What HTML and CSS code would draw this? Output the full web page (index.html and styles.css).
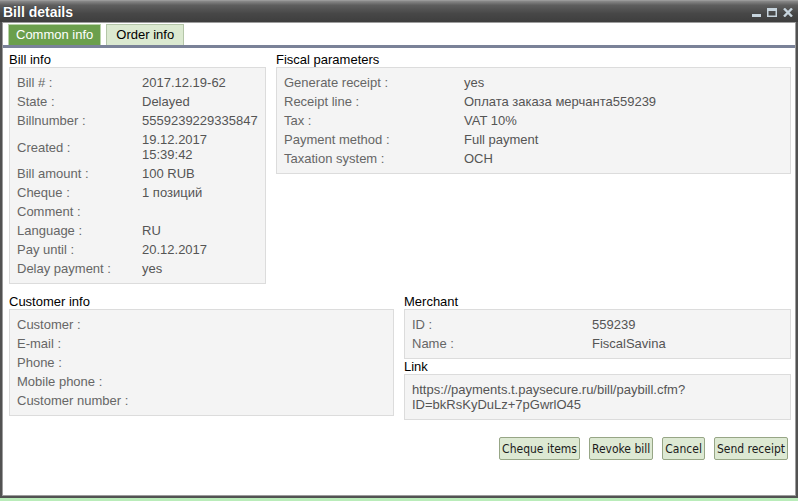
FILE: index.html
```html
<!DOCTYPE html>
<html lang="en">
<head>
    <meta charset="UTF-8">
    <title>Bill details</title>
    <link rel="stylesheet" href="styles.css">
</head>
<body>
    <div class="window">
        <div class="titlebar">
            <span class="title">Bill details</span>
            <div class="controls">
                <svg width="9" height="9" viewBox="0 0 9 9"><rect x="0" y="6" width="9" height="3" fill="#c7d4dd"/></svg>
                <svg width="10" height="9" viewBox="0 0 10 9"><rect x="0.75" y="0.75" width="8.5" height="7.5" fill="none" stroke="#c7d4dd" stroke-width="1.5"/><rect x="0" y="0" width="10" height="3" fill="#c7d4dd"/></svg>
                <svg width="10" height="9" viewBox="0 0 10 9"><path d="M1 0.5 L9 8.5 M9 0.5 L1 8.5" stroke="#c7d4dd" stroke-width="2.4"/></svg>
            </div>
        </div>
        <div class="content">
            <div class="tabs">
                <div class="tab active">Common info</div>
                <div class="tab">Order info</div>
            </div>
            <div class="body">
                <div class="row row-top">
                    <div class="section bill">
                        <div class="section-title">Bill info</div>
                        <div class="box grid grid-bill">
                            <div class="lbl">Bill # :</div><div class="val">2017.12.19-62</div>
                            <div class="lbl">State :</div><div class="val">Delayed</div>
                            <div class="lbl">Billnumber :</div><div class="val">5559239229335847</div>
                            <div class="lbl">Created :</div><div class="val">19.12.2017<br>15:39:42</div>
                            <div class="lbl">Bill amount :</div><div class="val">100 RUB</div>
                            <div class="lbl">Cheque :</div><div class="val">1 позиций</div>
                            <div class="lbl">Comment :</div><div class="val"></div>
                            <div class="lbl">Language :</div><div class="val">RU</div>
                            <div class="lbl">Pay until :</div><div class="val">20.12.2017</div>
                            <div class="lbl">Delay payment :</div><div class="val">yes</div>
                        </div>
                    </div>
                    <div class="section fiscal">
                        <div class="section-title">Fiscal parameters</div>
                        <div class="box grid grid-wide">
                            <div class="lbl">Generate receipt :</div><div class="val">yes</div>
                            <div class="lbl">Receipt line :</div><div class="val">Оплата заказа мерчанта559239</div>
                            <div class="lbl">Tax :</div><div class="val">VAT 10%</div>
                            <div class="lbl">Payment method :</div><div class="val">Full payment</div>
                            <div class="lbl">Taxation system :</div><div class="val">OCH</div>
                        </div>
                    </div>
                </div>
                <div class="row row-bottom">
                    <div class="section customer">
                        <div class="section-title">Customer info</div>
                        <div class="box grid grid-wide">
                            <div class="lbl">Customer :</div><div class="val"></div>
                            <div class="lbl">E-mail :</div><div class="val"></div>
                            <div class="lbl">Phone :</div><div class="val"></div>
                            <div class="lbl">Mobile phone :</div><div class="val"></div>
                            <div class="lbl">Customer number :</div><div class="val"></div>
                        </div>
                    </div>
                    <div class="section merchant">
                        <div class="section-title">Merchant</div>
                        <div class="box grid grid-wide">
                            <div class="lbl">ID :</div><div class="val">559239</div>
                            <div class="lbl">Name :</div><div class="val">FiscalSavina</div>
                        </div>
                        <div class="section-title">Link</div>
                        <div class="box">
                            <div class="val">https://payments.t.paysecure.ru/bill/paybill.cfm?<br>ID=bkRsKyDuLz+7pGwrlO45</div>
                        </div>
                    </div>
                </div>
                <div class="buttons">
                    <button class="btn">Cheque items</button>
                    <button class="btn">Revoke bill</button>
                    <button class="btn">Cancel</button>
                    <button class="btn">Send receipt</button>
                </div>
            </div>
        </div>
    </div>
</body>
</html>
```

FILE: styles.css
```css
body {
    margin: 0;
    background: #b9ecb9;
    font-family: "Liberation Sans", Arial, sans-serif;
    width: 798px;
    height: 501px;
    overflow: hidden;
}
.window {
    display: flex;
    flex-direction: column;
    width: 798px;
    height: 498px;
    box-sizing: border-box;
    padding: 0 2px 2px 2px;
    background: #525252;
}
.titlebar {
    height: 21px;
    display: flex;
    align-items: center;
    justify-content: space-between;
    padding: 0 5px 0 3px;
    background: linear-gradient(#8a8a8a 0%, #5e5e5e 20%, #474747 60%, #3e3e3e 100%);
    margin: 0 -2px;
    border-top: 1px solid #9a9a9a;
}
.title {
    color: #fff;
    font-weight: bold;
    font-size: 14px;
    text-shadow: 0 0 1px #222;
}
.controls {
    display: flex;
    gap: 6px;
    align-items: center;
    padding-top: 1px;
}
.content {
    flex: 1;
    display: flex;
    flex-direction: column;
    background: #fff;
    border: 1px solid #9d9d9d;
}
.tabs {
    display: flex;
    gap: 5px;
    padding: 1px 0 0 5px;
    border-bottom: 3px solid #7a8298;
}
.tab {
    height: 20px;
    line-height: 20px;
    padding: 0 9px;
    font-size: 13px;
    background: #dbe9d0;
    border: 1px solid #b4c6a8;
    border-bottom: none;
}
.tab.active {
    background: #6b9f4c;
    color: #fff;
    border-color: #b9d3a8;
    padding: 0 7px;
}
.body {
    flex: 1;
    padding: 4px 4px 0 6px;
}
.row {
    display: flex;
    gap: 10px;
    align-items: flex-start;
}
.row-bottom {
    margin-top: 10px;
}
.bill {
    width: 257px;
}
.fiscal {
    flex: 1;
}
.customer {
    width: 385px;
}
.merchant {
    flex: 1;
}
.section-title {
    font-size: 13px;
    line-height: 15px;
    color: #000;
}
.box {
    background: #f4f4f4;
    border: 1px solid #dcdcdc;
    padding: 5px 7px 5px 7px;
}
.grid {
    display: grid;
    align-items: center;
}
.grid-bill {
    grid-template-columns: 125px 1fr;
}
.grid-wide {
    grid-template-columns: 180px 1fr;
}
.lbl, .val {
    font-size: 13px;
    line-height: 15px;
    padding: 2px 0;
    color: #666;
    min-height: 15px;
}
.val {
    color: #555;
}
.buttons {
    display: flex;
    justify-content: flex-end;
    gap: 9px;
    margin: 17px 3px 0 0;
}
.btn {
    height: 23px;
    padding: 0 2px;
    font-family: "DejaVu Sans Condensed", "DejaVu Sans", sans-serif;
    font-size: 12px;
    color: #1a1a1a;
    background: #dde9d3;
    border: 1px solid #97a686;
    border-radius: 2px;
}
```
